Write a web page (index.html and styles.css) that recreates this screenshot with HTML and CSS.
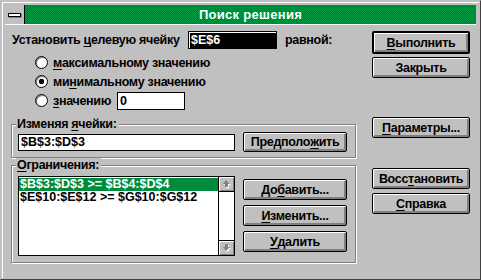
FILE: index.html
```html
<!DOCTYPE html>
<html lang="ru">

<head>
    <meta charset="UTF-8">
    <meta name="viewport" content="width=device-width, initial-scale=1.0">
    <title>Поиск решения</title>
    <link rel="stylesheet" href="styles.css">
</head>

<body>
    <div class="dialog">
        <div class="frame">
            <div class="titlebar">
                <div class="sysmenu"><span class="sysbar"></span></div>
                <div class="title">Поиск решения</div>
            </div>

            <div class="content">
                <div class="main">
                    <div class="target-row">
                        <span class="target-label">Установить <u>ц</u>елевую ячейку</span>
                        <div class="edit edit-target"><span class="selected-text">$E$6</span></div>
                        <span class="equal-label">равной:</span>
                    </div>

                    <div class="options">
                        <div class="option"><span class="radio"></span><u>м</u>аксимальному значению</div>
                        <div class="option"><span class="radio checked"></span>ми<u>н</u>имальному значению</div>
                        <div class="option">
                            <span class="radio"></span>
                            <span class="value-label"><u>з</u>начению</span>
                            <div class="edit edit-value">0</div>
                        </div>
                    </div>

                    <div class="group group-cells">
                        <span class="group-title">Изменяя <u>я</u>чейки:</span>
                        <div class="edit edit-cells">$B$3:$D$3</div>
                        <button class="btn btn-guess">Предполо<u>ж</u>ить</button>
                    </div>

                    <div class="group group-limits">
                        <span class="group-title"><u>О</u>граничения:</span>
                        <div class="listbox">
                            <div class="items">
                                <div class="item selected">$B$3:$D$3 &gt;= $B$4:$D$4</div>
                                <div class="item">$E$10:$E$12 &gt;= $G$10:$G$12</div>
                            </div>
                            <div class="scrollbar">
                                <div class="arrow">
                                    <svg width="9" height="8" viewBox="0 0 9 8">
                                        <path d="M5 1 L9 5 H7 V8 H4 V5 H2 Z" fill="#fff"/>
                                        <path d="M4 0 L8 4 H6 V7 H3 V4 H1 Z" fill="#808080"/>
                                    </svg>
                                </div>
                                <div class="track"></div>
                                <div class="arrow">
                                    <svg width="9" height="8" viewBox="0 0 9 8">
                                        <path d="M5 8 L9 4 H7 V1 H4 V4 H2 Z" fill="#fff"/>
                                        <path d="M4 7 L8 3 H6 V0 H3 V3 H1 Z" fill="#808080"/>
                                    </svg>
                                </div>
                            </div>
                        </div>
                        <div class="list-buttons">
                            <button class="btn">До<u>б</u>авить...</button>
                            <button class="btn"><u>И</u>зменить...</button>
                            <button class="btn"><u>У</u>далить</button>
                        </div>
                    </div>
                </div>

                <div class="actions">
                    <button class="btn btn-default"><u>В</u>ыполнить</button>
                    <button class="btn btn-close">Закрыть</button>
                    <button class="btn btn-params"><u>П</u>араметры...</button>
                    <button class="btn btn-reset">Восс<u>т</u>ановить</button>
                    <button class="btn btn-help"><u>С</u>правка</button>
                </div>
            </div>
        </div>
    </div>
</body>

</html>
```

FILE: styles.css
```css
body {
    margin: 0;
    font-family: "Liberation Sans", Arial, sans-serif;
    font-size: 12.5px;
    font-weight: bold;
    letter-spacing: -0.3px;
    color: #000;
    background-color: #c0c0c0;
}

u {
    text-underline-offset: 2px;
}

.dialog {
    box-sizing: border-box;
    width: 481px;
    height: 280px;
    border: 1px solid;
    border-color: #c0c0c0 #404040 #404040 #c0c0c0;
    padding: 1px;
    background: #c0c0c0;
}

.frame {
    box-sizing: border-box;
    height: 100%;
    border-left: 1px solid #fff;
    border-top: 1px solid #fff;
    padding: 2px 3px 2px 2px;
}

/* title bar */
.titlebar {
    display: flex;
    height: 19px;
    border-bottom: 1px solid #fff;
}

.sysmenu {
    width: 19px;
    border-right: 1px solid #000;
    background: #c0c0c0;
    display: flex;
    align-items: center;
    justify-content: center;
}

.sysbar {
    width: 11px;
    height: 2px;
    background: #fff;
    border: 1px solid #000;
    box-shadow: 1px 1px 0 #808080;
}

.title {
    flex: 1;
    display: flex;
    align-items: center;
    justify-content: center;
    color: #fff;
    font-size: 13px;
    letter-spacing: 0.3px;
    background-color: #008a3c;
    background-image: repeating-conic-gradient(#007a34 0 25%, #009a44 0 50%);
    background-size: 2px 2px;
}

/* layout */
.content {
    display: flex;
    padding-left: 6px;
}

.main {
    width: 345px;
}

.actions {
    display: flex;
    flex-direction: column;
    width: 98px;
    margin-left: 16px;
    padding-top: 6px;
}

/* target cell */
.target-row {
    display: flex;
    align-items: center;
    height: 18px;
    margin-top: 6px;
}

.target-label {
    width: 176px;
    padding-left: 1px;
}

.edit {
    box-sizing: border-box;
    display: flex;
    align-items: center;
    height: 18px;
    border: 1px solid #000;
    background: #fff;
    padding-left: 2px;
    letter-spacing: 0;
}

.edit-target {
    width: 89px;
    background: #000;
    box-shadow: inset 1px 1px 0 #fff;
    padding-left: 2px;
}

.selected-text {
    color: #fff;
}

.equal-label {
    margin-left: 8px;
}

/* radio options */
.options {
    margin-top: 4px;
    padding-left: 24px;
}

.option {
    display: flex;
    align-items: center;
    height: 19px;
}

.radio {
    box-sizing: border-box;
    width: 13px;
    height: 13px;
    margin-right: 5px;
    border: 1px solid #000;
    border-radius: 50%;
    background: #fff;
    box-shadow: inset 1px 1px 0 #808080;
}

.radio.checked {
    background: radial-gradient(circle, #000 0 2.5px, #fff 3px);
}

.value-label {
    width: 64px;
}

.edit-value {
    width: 68px;
}

/* group boxes */
.group {
    position: relative;
    display: flex;
    border: 1px solid #808080;
    box-shadow: 1px 1px 0 #fff, inset 1px 1px 0 #fff;
    padding-left: 6px;
}

.group-title {
    position: absolute;
    top: -8px;
    left: 4px;
    padding: 0 2px 0 1px;
    line-height: 14px;
    background: #c0c0c0;
}

.group-cells {
    margin-top: 14px;
    align-items: center;
    padding-top: 7px;
    padding-bottom: 5px;
}

.edit-cells {
    width: 217px;
    height: 17px;
}

.group-limits {
    margin-top: 7px;
    padding-top: 10px;
    padding-bottom: 6px;
}

/* buttons */
.btn {
    box-sizing: border-box;
    display: flex;
    align-items: center;
    justify-content: center;
    width: 98px;
    height: 21px;
    padding: 0;
    border: 1px solid #000;
    border-radius: 2px;
    background: #c0c0c0;
    box-shadow: inset 1px 1px 0 #fff, inset -2px -2px 0 #808080;
    font: inherit;
    letter-spacing: inherit;
    color: #000;
}

.btn-guess {
    width: 104px;
    height: 20px;
    margin-left: 8px;
}

.btn-default {
    height: 23px;
    border-width: 2px;
}

.btn-close {
    margin-top: 3px;
}

.btn-params {
    margin-top: 39px;
}

.btn-reset {
    margin-top: 30px;
}

.btn-help {
    margin-top: 4px;
}

.list-buttons {
    display: flex;
    flex-direction: column;
    gap: 5px;
    margin-left: 8px;
    padding-top: 3px;
}

.list-buttons .btn {
    width: 104px;
}

/* constraints list */
.listbox {
    box-sizing: border-box;
    display: flex;
    width: 217px;
    height: 80px;
    border: 1px solid #000;
    background: #fff;
}

.items {
    flex: 1;
    padding-top: 1px;
    letter-spacing: 0;
}

.item {
    height: 13px;
    line-height: 13px;
    padding-left: 1px;
    white-space: nowrap;
    overflow: hidden;
}

.item.selected {
    background: #008a3c;
    color: #fff;
}

.scrollbar {
    display: flex;
    flex-direction: column;
    width: 15px;
    border-left: 1px solid #000;
}

.arrow {
    box-sizing: border-box;
    display: flex;
    align-items: center;
    justify-content: center;
    height: 15px;
    background: #c0c0c0;
    box-shadow: inset 1px 1px 0 #fff, inset -1px -1px 0 #808080;
}

.arrow:first-child {
    border-bottom: 1px solid #000;
}

.arrow:last-child {
    border-top: 1px solid #000;
}

.track {
    flex: 1;
}
```
